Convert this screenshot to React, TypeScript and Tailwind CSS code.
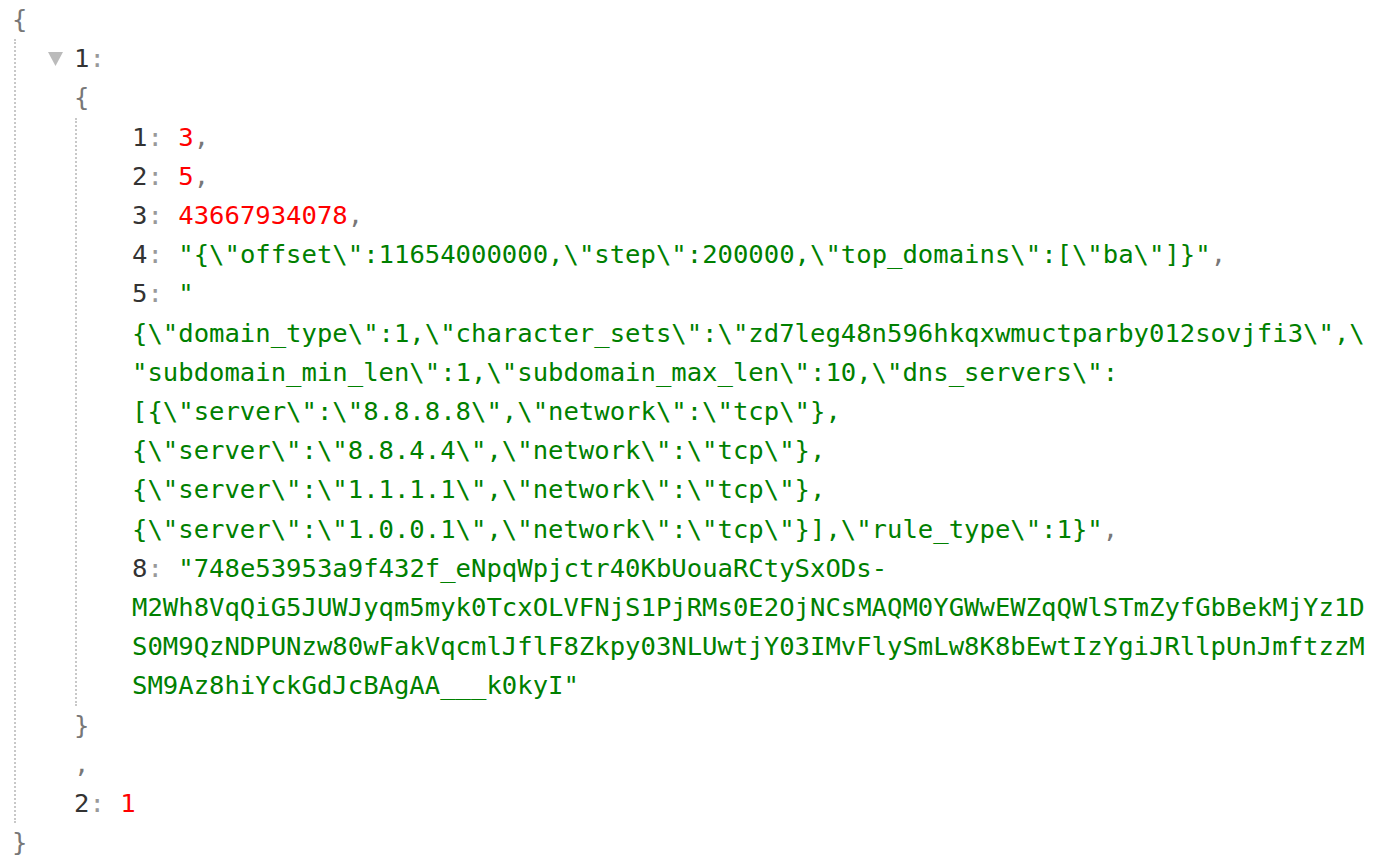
import React from 'react'

// raw JSON viewer: one collapsible object with a nested object and a number

const Key = ({ k }: { k: string }) => (
  <>
    <span className="text-[#333]">{k}</span>
    <span className="text-[#999]">: </span>
  </>
)

const Str = ({ children }: { children: React.ReactNode }) => (
  <span className="text-[#008000]">{children}</span>
)

const Num = ({ children }: { children: React.ReactNode }) => (
  <span className="text-[#f00]">{children}</span>
)

const Comma = () => <span className="text-[#777]">,</span>

const Brace = ({ children }: { children: React.ReactNode }) => (
  <div className="text-[#777]">{children}</div>
)

const Toggle = () => (
  <svg
    className="absolute left-[-26px] top-[13px] w-[15px] h-[14px]"
    viewBox="0 0 15 14"
  >
    <polygon points="0,0 15,0 7.5,14" fill="#bbb" />
  </svg>
)

const domainLines = [
  '{\\"domain_type\\":1,\\"character_sets\\":\\"zd7leg48n596hkqxwmuctparby012sovjfi3\\",\\',
  '"subdomain_min_len\\":1,\\"subdomain_max_len\\":10,\\"dns_servers\\":',
  '[{\\"server\\":\\"8.8.8.8\\",\\"network\\":\\"tcp\\"},',
  '{\\"server\\":\\"8.8.4.4\\",\\"network\\":\\"tcp\\"},',
  '{\\"server\\":\\"1.1.1.1\\",\\"network\\":\\"tcp\\"},',
]

const tokenLines = [
  'M2Wh8VqQiG5JUWJyqm5myk0TcxOLVFNjS1PjRMs0E2OjNCsMAQM0YGWwEWZqQWlSTmZyfGbBekMjYz1D',
  'S0M9QzNDPUNzw80wFakVqcmlJflF8Zkpy03NLUwtjY03IMvFlySmLw8K8bEwtIzYgiJRllpUnJmftzzM',
]

export default function App() {
  return (
    <div className="min-h-screen bg-white font-['DejaVu_Sans_Mono',monospace] text-[25.6px] leading-[39.2px] whitespace-pre pl-[12px]">
      <Brace>{'{'}</Brace>
      <div className="ml-[2px] border-l-2 border-dotted border-[#c8c8c8] pl-[58px]">
        <div className="relative">
          <Toggle />
          <Key k="1" />
        </div>
        <Brace>{'{'}</Brace>
        <div className="ml-[1px] border-l-2 border-dotted border-[#c8c8c8] pl-[55px]">
          <div>
            <Key k="1" />
            <Num>3</Num>
            <Comma />
          </div>
          <div>
            <Key k="2" />
            <Num>5</Num>
            <Comma />
          </div>
          <div>
            <Key k="3" />
            <Num>43667934078</Num>
            <Comma />
          </div>
          <div>
            <Key k="4" />
            <Str>{'"{\\"offset\\":11654000000,\\"step\\":200000,\\"top_domains\\":[\\"ba\\"]}"'}</Str>
            <Comma />
          </div>
          <div>
            <Key k="5" />
            <Str>"</Str>
          </div>
          {domainLines.map((line) => (
            <div key={line}>
              <Str>{line}</Str>
            </div>
          ))}
          <div>
            <Str>{'{\\"server\\":\\"1.0.0.1\\",\\"network\\":\\"tcp\\"}],\\"rule_type\\":1}"'}</Str>
            <Comma />
          </div>
          <div>
            <Key k="8" />
            <Str>"748e53953a9f432f_eNpqWpjctr40KbUouaRCtySxODs-</Str>
          </div>
          {tokenLines.map((line) => (
            <div key={line}>
              <Str>{line}</Str>
            </div>
          ))}
          <div>
            <Str>SM9Az8hiYckGdJcBAgAA___k0kyI"</Str>
          </div>
        </div>
        <Brace>{'}'}</Brace>
        <Brace>,</Brace>
        <div>
          <Key k="2" />
          <Num>1</Num>
        </div>
      </div>
      <Brace>{'}'}</Brace>
    </div>
  )
}
